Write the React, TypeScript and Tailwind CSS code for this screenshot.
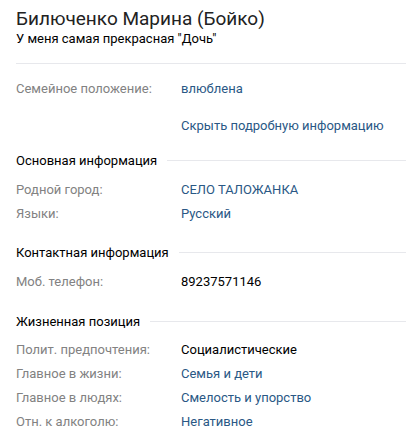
const labelCls = "w-[165px] shrink-0 text-[#828282]";

type Row = { label: string; value: string; link?: boolean };

const InfoRow = ({ label, value, link = true }: Row) => (
  <div className="flex h-[24px] items-center">
    <div className={labelCls}>{label}</div>
    <div className={link ? "text-[#2a5885]" : "text-black"}>{value}</div>
  </div>
);

const SectionHeader = ({ title }: { title: string }) => (
  <div className="flex items-center h-[20px]">
    <span className="text-black pr-[10px]">{title}</span>
    <div className="flex-1 h-px bg-[#e7e8ec]" />
  </div>
);

export default function App() {
  return (
    <div
      className="w-[406px] h-[446px] bg-white pl-4 text-[13px] leading-[17px] overflow-hidden"
      style={{ fontFamily: "Roboto, 'Open Sans', Arial, sans-serif" }}
    >
      <div className="pt-[8px] pb-[16px] border-b border-[#e7e8ec]">
        <h2 className="text-[19px] leading-[22px] text-[#222]">Билюченко Марина (Бойко)</h2>
        <div className="text-black">У меня самая прекрасная "Дочь"</div>
      </div>

      <div className="pt-[12px]">
        <InfoRow label="Семейное положение:" value="влюблена" />
        <div className="flex h-[24px] items-center mt-[13px]">
          <div className={labelCls} />
          <div className="text-[#2a5885]">Скрыть подробную информацию</div>
        </div>
      </div>

      <div className="mt-[13px]">
        <SectionHeader title="Основная информация" />
        <div className="mt-[7px]">
          <InfoRow label="Родной город:" value="СЕЛО ТАЛОЖАНКА" />
          <InfoRow label="Языки:" value="Русский" />
        </div>
      </div>

      <div className="mt-[17px]">
        <SectionHeader title="Контактная информация" />
        <div className="mt-[7px]">
          <InfoRow label="Моб. телефон:" value="89237571146" link={false} />
        </div>
      </div>

      <div className="mt-[18px]">
        <SectionHeader title="Жизненная позиция" />
        <div className="mt-[6px]">
          <InfoRow label="Полит. предпочтения:" value="Социалистические" link={false} />
          <InfoRow label="Главное в жизни:" value="Семья и дети" />
          <InfoRow label="Главное в людях:" value="Смелость и упорство" />
          <InfoRow label="Отн. к алкоголю:" value="Негативное" />
        </div>
      </div>
    </div>
  );
}
